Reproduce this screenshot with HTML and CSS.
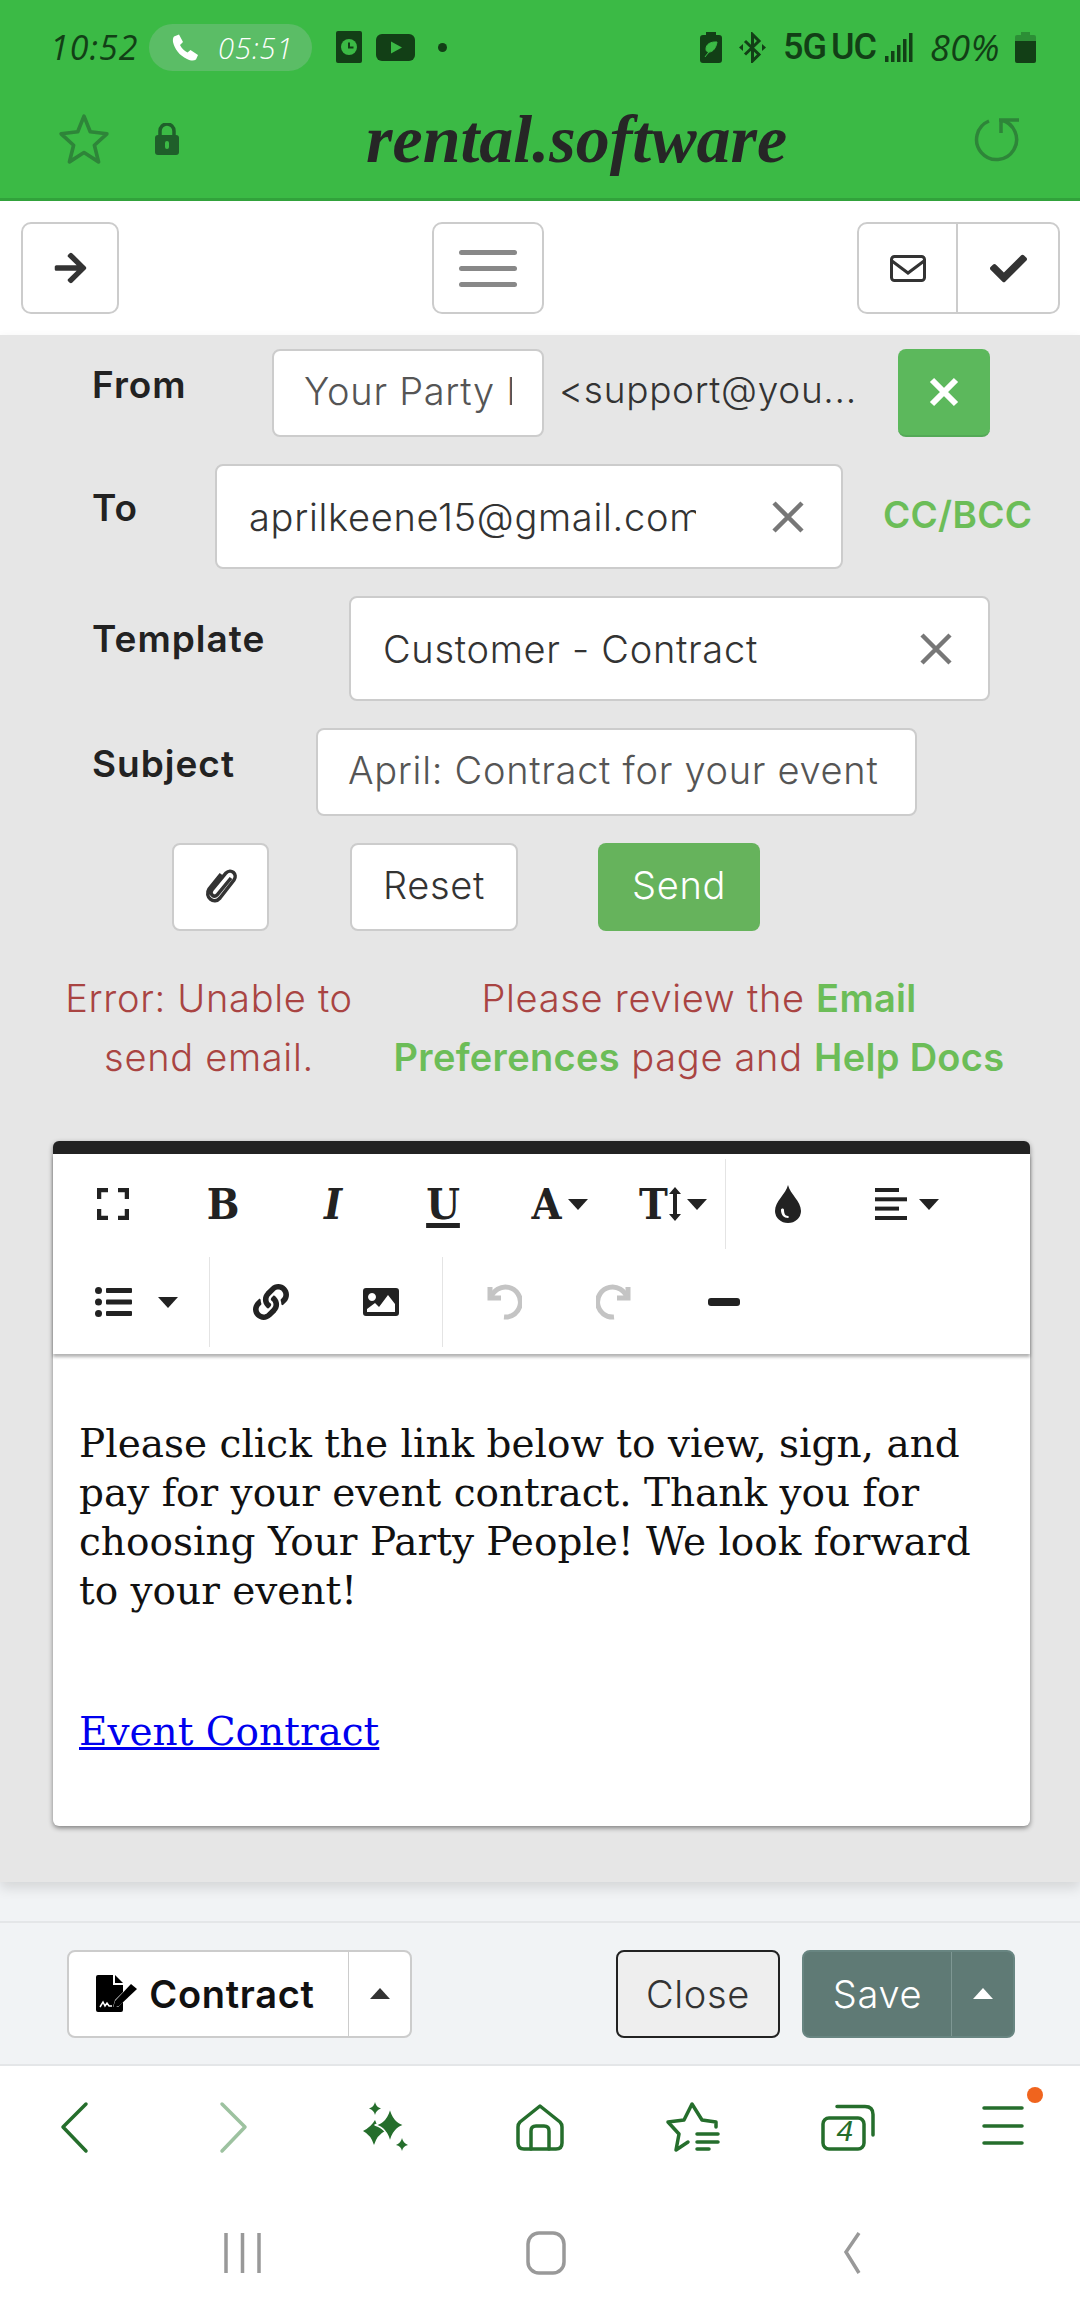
FILE: index.html
```html
<!DOCTYPE html>
<html>

<head>
    <link rel="stylesheet" href="styles.css">
</head>

<body>
    <header class="browser-top">
        <div class="status">
            <span class="clock">10:52</span>
            <span class="call">
                <svg class="ic-phone" viewBox="0 0 27 27"><path d="M2 2.500 7 .5 11 8 8 11c1.500 3 4 5.500 7.500 7.500l3-2.500 7.500 5-2 4.500c-2 1.500-5 1.500-9-.5C7.500 21.500 2.500 15 1 8c-.3-2.500 0-4.500 1-5.500z"/></svg>
                <span>05:51</span>
            </span>
            <svg class="ic-clockbox" viewBox="0 0 26 32"><rect width="26" height="32" rx="2"/><circle cx="13" cy="16" r="8" fill="#3bba45"/><path d="M13 11.500v5h4.500" fill="none" stroke="#123f16" stroke-width="2"/></svg>
            <svg class="ic-yt" viewBox="0 0 39 27"><rect width="39" height="27" rx="6"/><path d="M15 7.500 26 13.500 15 19.500z" fill="#3bba45"/></svg>
            <span class="dot"></span>
            <span class="status-gap"></span>
            <svg class="ic-batt-save" viewBox="0 0 22 31"><path d="M6 0h10v3h3q3 0 3 3v22q0 3-3 3H3q-3 0-3-3V6q0-3 3-3h3z"/><path d="M17 10c-6-.5-11 2-11 7 0 2 1 3 3 3 4 0 7-4 8-10zM5 25c2-3 4-5 7-8" fill="#3bba45" stroke="#3bba45" stroke-width="1"/></svg>
            <svg class="ic-bt" viewBox="0 0 27 31"><path d="M6 9 20 22.500 13.500 29V2.500L20 9 6 22.500" fill="none" stroke="#123f16" stroke-width="3"/><path d="M0 15.500 4 12v7zM27 15.500 23 12v7z"/></svg>
            <span class="net">5G UC</span>
            <svg class="ic-signal" viewBox="0 0 28 29"><rect x="0" y="23" width="3.500" height="6"/><rect x="6" y="18" width="3.500" height="11"/><rect x="12" y="12" width="3.500" height="17"/><rect x="18" y="6" width="3.500" height="23"/><rect x="24" y="0" width="3.500" height="29"/></svg>
            <span class="pct">80%</span>
            <svg class="ic-batt" viewBox="0 0 21 31"><path d="M6 0h9v3h4q2 0 2 2v6H0V5q0-2 2-2h4z" fill="#2c8f36"/><path d="M0 9h21v20q0 2-2 2H2q-2 0-2-2z"/></svg>
        </div>
        <div class="address">
            <svg class="ic-star" viewBox="0 0 50 50"><path d="M25 3 31 18 47 20 35 31 39 47 25 38 11 47 15 31 3 20 19 18z"/></svg>
            <svg class="ic-lock" viewBox="0 0 24 32"><path d="M5 14V8a7 7 0 0 1 14 0v6" fill="none" stroke="#1f5f2a" stroke-width="3.500"/><rect y="12" width="24" height="20" rx="3" fill="#1f5f2a"/><rect x="10" y="18" width="4" height="8" rx="2" fill="#3bba45"/></svg>
            <span class="site">rental.software</span>
            <svg class="ic-reload" viewBox="0 0 46 46"><path d="M27 4A20 20 0 1 1 15 5M25 4h20M27 4v13"/></svg>
        </div>
    </header>

    <nav class="toolbar">
        <button class="tbtn tbtn-back"><svg class="ic-arrow" viewBox="0 0 448 512"><path d="M190.500 66.900l22.200-22.200c9.400-9.400 24.600-9.400 33.900 0L441 239c9.400 9.400 9.400 24.600 0 33.900L246.600 467.300c-9.400 9.400-24.600 9.400-33.900 0l-22.200-22.200c-9.500-9.500-9.300-25 .4-34.300L311.400 296H24c-13.300 0-24-10.700-24-24v-32c0-13.300 10.700-24 24-24h287.400L190.900 101.200c-9.800-9.300-10-24.800-.4-34.300z"/></svg></button>
        <button class="tbtn tbtn-menu"><span class="bars"><i></i><i></i><i></i></span></button>
        <div class="tgroup">
            <button class="tbtn-part part-mail"><svg class="ic-mail" viewBox="0 0 36 27"><rect x="1.500" y="1.500" width="33" height="24" rx="3"/><path d="M2 6l16 12L34 6"/></svg></button>
            <button class="tbtn-part part-check"><svg class="ic-check" viewBox="0 0 512 512"><path d="M173.898 439.404l-166.400-166.400c-9.997-9.997-9.997-26.206 0-36.204l36.203-36.204c9.997-9.998 26.207-9.998 36.204 0L192 312.690 432.095 72.596c9.997-9.997 26.207-9.997 36.204 0l36.203 36.204c9.997 9.997 9.997 26.206 0 36.204l-294.400 294.401c-9.998 9.997-26.207 9.997-36.204-.001z"/></svg></button>
        </div>
    </nav>

    <main class="content">
        <div class="row row-from">
            <label class="lbl">From</label>
            <input class="field field-name" type="text" value="Your Party People">
            <span class="addr">&lt;support@you...</span>
            <button class="btn-x"><svg viewBox="0 0 24 24"><path d="M4 4l16 16M20 4 4 20"/></svg></button>
        </div>
        <div class="row row-to">
            <label class="lbl">To</label>
            <div class="pick pick-to">
                <span class="pick-text">aprilkeene15@gmail.com</span>
                <svg class="ic-x" viewBox="0 0 32 32"><path d="M2 2l28 28M30 2 2 30"/></svg>
            </div>
            <a class="cc">CC/BCC</a>
        </div>
        <div class="row row-template">
            <label class="lbl">Template</label>
            <div class="pick pick-template">
                <span class="pick-text">Customer - Contract</span>
                <svg class="ic-x" viewBox="0 0 32 32"><path d="M2 2l28 28M30 2 2 30"/></svg>
            </div>
        </div>
        <div class="row row-subject">
            <label class="lbl">Subject</label>
            <input class="field field-subject" type="text" value="April: Contract for your event">
        </div>
        <div class="row row-actions">
            <button class="btn btn-clip"><svg class="ic-clip" viewBox="0 0 34 36"><path d="M27 11 13 28c-3 3-8-1-5-5L22 6c5-5 12 1 8 7L16 31c-6 7-16-1-11-9L17 7"/></svg></button>
            <button class="btn btn-reset">Reset</button>
            <button class="btn btn-send">Send</button>
        </div>
        <div class="msgs">
            <p class="msg msg-err">Error: Unable to send email.</p>
            <p class="msg msg-help">Please review the <b>Email Preferences</b> page and <b>Help Docs</b></p>
        </div>

        <section class="editor">
            <div class="ed-tools">
                <div class="ed-row">
                    <span class="tool t-110"><svg class="ic-full" viewBox="0 0 32 32"><path d="M2 11V2h9M21 2h9v9M30 21v9h-9M11 30H2v-9"/></svg></span>
                    <span class="tool t-110 glyph">B</span>
                    <span class="tool t-110 glyph gi">I</span>
                    <span class="tool t-110 glyph gu">U</span>
                    <span class="tool t-123 glyph">A<i class="caret"></i></span>
                    <span class="tool t-104 glyph">T<svg class="ic-height" viewBox="0 0 12 34"><path d="M6 0l6 7H8v20h4l-6 7-6-7h4V7H0z"/></svg><i class="caret"></i></span>
                    <span class="tool t-124 sep"><svg class="ic-drop" viewBox="0 0 26 38"><path fill-rule="evenodd" d="M13 0c2 9 13 16 13 26a13 12 0 0 1-26 0C0 16 11 9 13 0zM6 25c0 5 3 8 7 8 1 0 1-2 0-2-3 0-4-3-4-6 0-2-3-2-3 0z"/></svg></span>
                    <span class="tool t-116"><svg class="ic-align" viewBox="0 0 32 32"><rect width="24" height="4"/><rect y="9.300" width="32" height="4"/><rect y="18.600" width="24" height="4"/><rect y="28" width="32" height="4"/></svg><i class="caret caret-wide"></i></span>
                </div>
                <div class="ed-row">
                    <span class="tool t-151 t-list"><svg class="ic-list" viewBox="0 0 37 30"><circle cx="3.500" cy="3.500" r="3.500"/><circle cx="3.500" cy="15" r="3.500"/><circle cx="3.500" cy="26.500" r="3.500"/><rect x="11" y="1" width="26" height="5" rx="1"/><rect x="11" y="12.500" width="26" height="5" rx="1"/><rect x="11" y="24" width="26" height="5" rx="1"/></svg><i class="caret caret-list"></i></span>
                    <span class="tool t-122 sep"><svg class="ic-link" viewBox="0 0 512 512"><path d="M326.612 185.391c59.747 59.809 58.927 155.698.360 214.590-.110.120-.240.250-.360.370l-67.200 67.200c-59.270 59.270-155.699 59.262-214.960 0-59.270-59.260-59.270-155.700 0-214.960l37.106-37.106c9.840-9.840 26.786-3.300 27.294 10.606.648 17.722 3.826 35.527 9.690 52.721 1.986 5.822.567 12.262-3.783 16.612l-13.087 13.087c-28.026 28.026-28.905 73.660-1.155 101.960 28.024 28.579 74.086 28.749 102.325.510l67.200-67.190c28.191-28.191 28.073-73.757 0-101.830-3.701-3.694-7.429-6.564-10.341-8.569a16.037 16.037 0 0 1-6.947-12.606c-.396-10.567 3.348-21.456 11.698-29.806l21.054-21.055c5.521-5.521 14.182-6.199 20.584-1.731a152.482 152.482 0 0 1 20.522 17.197zM467.547 44.449c-59.261-59.262-155.690-59.270-214.960 0l-67.200 67.200c-.120.120-.250.250-.360.370-58.566 58.892-59.387 154.781.360 214.590a152.454 152.454 0 0 0 20.521 17.196c6.402 4.468 15.064 3.789 20.584-1.731l21.054-21.055c8.350-8.350 12.094-19.239 11.698-29.806a16.037 16.037 0 0 0-6.947-12.606c-2.912-2.005-6.640-4.875-10.341-8.569-28.073-28.073-28.191-73.639 0-101.830l67.200-67.190c28.239-28.239 74.300-28.069 102.325.510 27.750 28.300 26.872 73.934-1.155 101.960l-13.087 13.087c-4.350 4.350-5.769 10.790-3.783 16.612 5.864 17.194 9.042 34.999 9.690 52.721.509 13.906 17.454 20.446 27.294 10.606l37.106-37.106c59.271-59.259 59.271-155.699.001-214.959z"/></svg></span>
                    <span class="tool t-100"><svg class="ic-image" viewBox="0 0 36 28"><path fill-rule="evenodd" d="M3 0h30q3 0 3 3v22q0 3-3 3H3q-3 0-3-3V3q0-3 3-3zM4 24h28v-8l-7-9-9 12-4-4-8 6zM9 5a4 4 0 1 0 .01 0z"/></svg></span>
                    <span class="tool t-122 sep sep-late"><svg class="ic-undo" viewBox="0 0 36 36"><path d="M4 3v11h11"/><path d="M5 14A15 15 0 1 1 18 33"/></svg></span>
                    <span class="tool t-100"><svg class="ic-undo" viewBox="0 0 36 36"><path d="M32 3v11H21"/><path d="M31 14A15 15 0 1 0 18 33"/></svg></span>
                    <span class="tool t-120"><span class="minus"></span></span>
                </div>
            </div>
            <div class="ed-body">
                <p>Please click the link below to view, sign, and pay for your event contract. Thank you for choosing Your Party People! We look forward to your event!</p>
                <p class="ed-link"><a>Event Contract</a></p>
            </div>
        </section>
    </main>

    <footer class="foot">
        <div class="foot-bar">
            <div class="split split-contract">
                <button class="split-main">
                    <svg class="ic-sign" viewBox="0 0 41 37"><path d="M2 0H17V10H27V17L19 25 17 32H22L27 27V35Q27 37 25 37H2Q0 37 0 35V2Q0 0 2 0Z"/><path d="M19 0 27 8H19Z"/><path d="M35 9 41 14 23 31 17 33 19 26Z"/><path d="M4 32 7 27 9 31 11 28 13 31H16" fill="none" stroke="#fff" stroke-width="1.500"/></svg>
                    Contract
                </button>
                <button class="split-drop"><i class="tri"></i></button>
            </div>
            <button class="btn-close">Close</button>
            <div class="split split-save">
                <button class="split-main">Save</button>
                <button class="split-drop"><i class="tri"></i></button>
            </div>
        </div>
    </footer>

    <div class="phone-nav">
        <div class="nav-icons">
            <svg class="ni" viewBox="0 0 60 60"><path d="M39 7 16 30 39 54"/></svg>
            <svg class="ni ni-off" viewBox="0 0 60 60"><path d="M21 7 44 30 21 54"/></svg>
            <svg class="ni ni-fill" viewBox="0 0 60 60"><path d="M19 23Q21 30 29 34 21 38 18 48 15 38 7 34 15 30 19 23Z"/><path d="M34 10Q37 25 49 28 37 31 34 46 31 31 19 28 31 25 34 10Z" stroke="#fff" stroke-width="1.500"/><path d="M19 5Q20 10 25 11.500 20 13 19 18 18 13 13 11.500 18 10 19 5ZM46 41Q47 46 52 48 47 49 46 54 45 49 40 48 45 46 46 41Z"/></svg>
            <svg class="ni" viewBox="0 0 60 60"><path d="M30 9 50 25Q52 27 52 30V46Q52 52 46 52H14Q8 52 8 46V30Q8 27 10 25Z"/><path d="M21 52V34Q21 29 26 29H34Q39 29 39 34V52"/></svg>
            <svg class="ni" viewBox="0 0 60 60"><path d="M52 30V25L38 23 28 7 20 23 4 25 15 37 12 53 24 45"/><path d="M33 37H54M33 45H54M33 52H45"/></svg>
            <span class="tabs-ic">
                <svg class="ni" viewBox="0 0 60 60"><path d="M18 9.500H46Q54 9.500 54 17.500V38"/><rect x="4" y="21" width="41" height="31" rx="6"/></svg>
                <span class="tabs-num">4</span>
            </span>
            <span class="menu-ic">
                <svg class="ni" viewBox="0 0 60 60"><path d="M11 11h38M11 29h38M11 46h38"/></svg>
                <i class="badge"></i>
            </span>
        </div>
        <div class="sys-icons">
            <svg class="si" viewBox="0 0 40 44"><path d="M3 2v40M19.500 2v40M36 2v40"/></svg>
            <svg class="si" viewBox="0 0 40 44"><rect x="2" y="2" width="36" height="40" rx="11"/></svg>
            <svg class="si" viewBox="0 0 40 44"><path d="M31 2 18 21l13 21"/></svg>
        </div>
    </div>
</body>

</html>
```

FILE: styles.css
```css
* {
    box-sizing: border-box;
}

html,
body {
    margin: 0;
    padding: 0;
}

body {
    width: 1080px;
    height: 2316px;
    overflow: hidden;
    font-family: Inter, "Noto Sans", sans-serif;
    color: #222;
    background-color: #fff;
    display: flex;
    flex-direction: column;
}

button {
    font-family: inherit;
    padding: 0;
}

svg {
    display: block;
    flex: none;
}

/* browser top */
.browser-top {
    height: 201px;
    background-color: #3bba45;
    border-bottom: 3px solid #31a23b;
}

.status {
    display: flex;
    align-items: center;
    height: 94px;
    padding: 0 44px 0 50px;
    color: #123f16;
    fill: #123f16;
}

.clock {
    width: 99px;
    font-family: "Open Sans", sans-serif;
    font-style: italic;
    font-size: 34px;
    letter-spacing: 1px;
}

.call {
    display: flex;
    align-items: center;
    width: 163px;
    height: 47px;
    padding-left: 23px;
    border-radius: 24px;
    background-color: #5bbd66;
    color: #fff;
    font-family: "Open Sans", sans-serif;
    font-style: italic;
    font-weight: 300;
    font-size: 29px;
    letter-spacing: 1px;
}

.ic-phone {
    width: 27px;
    height: 27px;
    fill: #fff;
    margin-right: 19px;
}

.ic-clockbox {
    width: 26px;
    height: 32px;
    margin-left: 24px;
}

.ic-yt {
    width: 39px;
    height: 27px;
    margin-left: 14px;
}

.dot {
    width: 9px;
    height: 9px;
    margin-left: 23px;
    border-radius: 50%;
    background-color: #123f16;
}

.status-gap {
    flex: 1;
}

.ic-batt-save {
    width: 22px;
    height: 31px;
}

.ic-bt {
    width: 27px;
    height: 31px;
    margin-left: 17px;
}

.net {
    width: 90px;
    margin-left: 17px;
    font-family: Roboto, sans-serif;
    font-weight: 500;
    font-size: 36px;
    letter-spacing: -1px;
    word-spacing: -3px;
    white-space: nowrap;
}

.ic-signal {
    width: 28px;
    height: 29px;
    margin-left: 12px;
}

.pct {
    width: 85px;
    margin-left: 17px;
    font-family: "Open Sans", sans-serif;
    font-style: italic;
    font-size: 36px;
    letter-spacing: .5px;
}

.ic-batt {
    width: 21px;
    height: 31px;
}

.address {
    display: flex;
    align-items: center;
    height: 104px;
    padding: 0 60px 14px 58px;
}

.ic-star {
    width: 52px;
    height: 52px;
    fill: none;
    stroke: #2e8539;
    stroke-width: 3.5;
    stroke-linejoin: round;
}

.ic-lock {
    width: 24px;
    height: 32px;
    margin-left: 45px;
}

.site {
    flex: 1;
    padding-left: 187px;
    font-family: "Liberation Serif", serif;
    font-style: italic;
    font-weight: bold;
    font-size: 68px;
    color: #262626;
}

.ic-reload {
    width: 46px;
    height: 46px;
    fill: none;
    stroke: #2e8539;
    stroke-width: 3.5;
}

/* page toolbar */
.toolbar {
    display: flex;
    justify-content: space-between;
    align-items: flex-start;
    height: 134px;
    padding: 21px 20px 0 21px;
    background-color: #fff;
}

.tbtn,
.tgroup {
    height: 92px;
    border: 2px solid #ccc;
    border-radius: 10px;
    background-color: #fff;
}

.tbtn {
    display: flex;
    align-items: center;
    justify-content: center;
}

.tbtn-back {
    width: 98px;
}

.tbtn-menu {
    width: 112px;
}

.ic-arrow {
    width: 33px;
    height: 36px;
    fill: #333;
}

.bars {
    display: flex;
    flex-direction: column;
    gap: 11px;
    width: 58px;
}

.bars i {
    display: block;
    height: 5px;
    border-radius: 3px;
    background-color: #888;
}

.tgroup {
    display: flex;
    width: 203px;
}

.tbtn-part {
    display: flex;
    align-items: center;
    justify-content: center;
    border: none;
    background: none;
}

.part-mail {
    width: 99px;
    border-right: 2px solid #ccc;
}

.part-check {
    flex: 1;
}

.ic-mail {
    width: 36px;
    height: 27px;
    fill: none;
    stroke: #333;
    stroke-width: 3;
}

.ic-check {
    width: 37px;
    height: 37px;
    fill: #333;
}

/* form */
.content {
    height: 1547px;
    padding-top: 14px;
    background-color: #e6e6e6;
    box-shadow: 0 6px 12px rgba(0, 0, 0, .12);
    position: relative;
}

.row {
    display: flex;
    align-items: flex-start;
    padding-left: 92px;
    margin-bottom: 27px;
}

.lbl {
    font-size: 37px;
    font-weight: 600;
    line-height: 50px;
    color: #222;
    letter-spacing: 1px;
}

.row-from .lbl {
    width: 180px;
    margin-top: 11px;
}

.row-to .lbl {
    width: 123px;
    margin-top: 19px;
}

.row-template .lbl {
    width: 257px;
    margin-top: 18px;
}

.row-subject .lbl {
    width: 224px;
    margin-top: 11px;
}

.field {
    height: 88px;
    padding: 0 30px 4px;
    border: 2px solid #ccc;
    border-radius: 8px;
    background-color: #fff;
    font-family: inherit;
    font-size: 38px;
    font-weight: 300;
    letter-spacing: .7px;
    color: #555;
    outline: none;
}

.field-name {
    width: 272px;
}

.field-subject {
    width: 601px;
}

.addr {
    width: 354px;
    padding-left: 15px;
    line-height: 82px;
    font-size: 37px;
    font-weight: 300;
    letter-spacing: .7px;
    color: #333;
}

.btn-x {
    display: flex;
    align-items: center;
    justify-content: center;
    width: 92px;
    height: 88px;
    border: none;
    border-bottom: 2px solid #54a957;
    border-radius: 8px;
    background-color: #5cb85c;
}

.btn-x svg {
    width: 36px;
    height: 36px;
    fill: none;
    stroke: #fff;
    stroke-width: 4;
}

.pick {
    display: flex;
    align-items: center;
    height: 105px;
    padding: 0 30px 0 32px;
    border: 2px solid #ccc;
    border-radius: 8px;
    background-color: #fff;
    font-size: 38px;
    font-weight: 300;
    letter-spacing: .7px;
    color: #333;
}

.pick-to {
    width: 628px;
}

.pick-template {
    width: 641px;
}

.pick-text {
    flex: 1;
    overflow: hidden;
    white-space: nowrap;
}

.pick-to .pick-text {
    flex: none;
    width: 447px;
    margin-right: 76px;
}

.pick-template .ic-x {
    margin-right: 6px;
}

.ic-x {
    width: 32px;
    height: 32px;
    fill: none;
    stroke: #777;
    stroke-width: 4.500;
}

.cc {
    margin: 28px 0 0 40px;
    font-size: 37px;
    font-weight: 600;
    letter-spacing: .3px;
    color: #6cbd58;
}

.row-actions {
    padding-left: 172px;
    margin-bottom: 38px;
}

.btn {
    height: 88px;
    padding-bottom: 4px;
    border: 2px solid #ccc;
    border-radius: 8px;
    background-color: #fff;
    font-size: 38px;
    font-weight: 300;
    letter-spacing: .7px;
    color: #333;
}

.btn-clip {
    display: flex;
    align-items: center;
    justify-content: center;
    width: 97px;
    margin-right: 81px;
}

.ic-clip {
    width: 34px;
    height: 36px;
    fill: none;
    stroke: #333;
    stroke-width: 3.500;
}

.btn-reset {
    width: 168px;
    margin-right: 80px;
}

.btn-send {
    width: 162px;
    border: none;
    background-color: #66b35c;
    color: #fff;
}

.msgs {
    display: flex;
    height: 118px;
    margin-bottom: 54px;
    font-size: 38px;
    font-weight: 300;
    letter-spacing: .7px;
    line-height: 59px;
    text-align: center;
}

.msg {
    margin: 0;
}

.msg b {
    font-weight: 600;
    letter-spacing: .3px;
    color: #6cbd58;
}

.msg-err {
    width: 320px;
    margin-left: 49px;
    color: #a94442;
}

.msg-help {
    width: 640px;
    margin-left: 10px;
    color: #a94442;
}

/* editor */
.editor {
    width: 977px;
    height: 685px;
    margin-left: 53px;
    border-top: 13px solid #222;
    border-radius: 6px;
    background-color: #fff;
    box-shadow: 0 2px 5px rgba(0, 0, 0, .45);
}

.ed-tools {
    height: 200px;
    padding-left: 5px;
    box-shadow: 0 3px 3px rgba(0, 0, 0, .3);
}

.ed-row {
    display: flex;
    height: 98px;
}

.tool {
    display: flex;
    align-items: center;
    justify-content: center;
    height: 90px;
    margin-top: 5px;
    fill: #222;
    color: #222;
}

.t-100 { width: 100px; }
.t-104 { width: 104px; }
.t-110 { width: 110px; }
.t-116 { width: 116px; }
.t-120 { width: 120px; }
.t-122 { width: 122px; }
.t-123 { width: 123px; }
.t-124 { width: 124px; }
.t-151 { width: 151px; }

.sep {
    border-left: 1.500px solid #e4e4e4;
}

.sep-late {
    margin-left: 11px;
}

.glyph {
    font-family: "DejaVu Serif", serif;
    font-stretch: condensed;
    font-weight: bold;
    font-size: 43px;
}

.gi {
    font-style: italic;
}

.gu {
    text-decoration: underline;
    text-decoration-thickness: 5px;
    text-underline-offset: 4px;
}

.caret {
    display: inline-block;
    width: 0;
    height: 0;
    margin-left: 6px;
    border-left: 10px solid transparent;
    border-right: 10px solid transparent;
    border-top: 11px solid #222;
}

.caret-wide {
    margin-left: 12px;
}

.caret-list {
    margin-left: 26px;
}

.t-list {
    justify-content: flex-start;
    padding-left: 37px;
}

.ic-full {
    width: 32px;
    height: 32px;
    fill: none;
    stroke: #222;
    stroke-width: 4.500;
}

.ic-height {
    width: 12px;
    height: 34px;
    margin-left: 1px;
}

.ic-drop {
    width: 26px;
    height: 38px;
}

.ic-align {
    width: 32px;
    height: 32px;
}

.ic-list {
    width: 37px;
    height: 30px;
}

.ic-link {
    width: 36px;
    height: 36px;
}

.ic-image {
    width: 36px;
    height: 28px;
}

.ic-undo {
    width: 36px;
    height: 36px;
    fill: none;
    stroke: #c4c4c4;
    stroke-width: 5;
}

.minus {
    width: 32px;
    height: 8px;
    border-radius: 3px;
    background-color: #222;
}

.ed-body {
    padding: 65px 26px 0;
    font-family: "DejaVu Serif", serif;
    font-size: 39px;
    line-height: 49px;
    color: #111;
}

.ed-body p {
    margin: 0;
}

.ed-link {
    padding-top: 92px;
}

.ed-link a {
    color: #0000ee;
    text-decoration: underline;
}

/* footer actions */
.foot {
    height: 184px;
    padding-top: 39px;
    background-color: #f1f3f5;
}

.foot-bar {
    display: flex;
    align-items: center;
    height: 145px;
    padding-left: 67px;
    border-top: 2px solid #e4e6e8;
    border-bottom: 2px solid #e4e6e8;
}

.split {
    display: flex;
    height: 88px;
    border-radius: 8px;
}

.split-contract {
    width: 345px;
    margin-right: 204px;
    border: 2px solid #ccc;
    background-color: #fff;
}

.split-save {
    width: 213px;
    margin-left: 22px;
    background-color: #5f7a75;
    border: 2px solid #688581;
}

.split-main {
    display: flex;
    align-items: center;
    justify-content: center;
    border: none;
    background: none;
    font-size: 38px;
    letter-spacing: .7px;
}

.split-contract .split-main {
    width: 279px;
    gap: 12px;
    padding-right: 6px;
    font-weight: 600;
    color: #111;
}

.split-save .split-main {
    width: 147px;
    font-weight: 300;
    color: #fff;
}

.split-drop {
    flex: 1;
    display: flex;
    align-items: center;
    justify-content: center;
    border: none;
    background: none;
    border-left: 1.500px solid #ccc;
}

.split-save .split-drop {
    border-left-color: #7e9793;
}

.tri {
    width: 0;
    height: 0;
    border-left: 10px solid transparent;
    border-right: 10px solid transparent;
    border-bottom: 11px solid #333;
}

.split-save .tri {
    border-bottom-color: #fff;
}

.ic-sign {
    width: 41px;
    height: 37px;
}

.btn-close {
    width: 164px;
    height: 88px;
    border: 2px solid #222;
    border-radius: 8px;
    background-color: #eee;
    font-size: 38px;
    font-weight: 300;
    letter-spacing: .7px;
    color: #333;
}

/* phone nav */
.phone-nav {
    flex: 1;
    background-color: #fff;
}

.nav-icons {
    display: grid;
    grid-template-columns: repeat(7, 1fr);
    height: 126px;
    padding-top: 31px;
    justify-items: center;
}

.ni {
    width: 60px;
    height: 60px;
    fill: none;
    stroke: #256e2c;
    stroke-width: 3.500;
    stroke-linejoin: round;
    stroke-linecap: round;
}

.ni-off {
    stroke: #9dc2a0;
}

.ni-fill {
    fill: #256e2c;
    stroke: none;
}

.tabs-ic,
.menu-ic {
    position: relative;
    width: 60px;
    height: 60px;
}

.tabs-num {
    position: absolute;
    left: 18px;
    top: 17px;
    width: 18px;
    font-family: "Liberation Sans", sans-serif;
    font-style: italic;
    font-size: 30px;
    color: #256e2c;
}

.badge {
    position: absolute;
    right: -10px;
    top: -10px;
    width: 16px;
    height: 16px;
    border-radius: 50%;
    background-color: #f0641e;
}

.sys-icons {
    display: grid;
    grid-template-columns: repeat(3, 302.500px);
    padding-left: 92px;
    padding-top: 39px;
    justify-items: center;
}

.si {
    width: 40px;
    height: 44px;
    fill: none;
    stroke: #999;
    stroke-width: 3.500;
}
```
